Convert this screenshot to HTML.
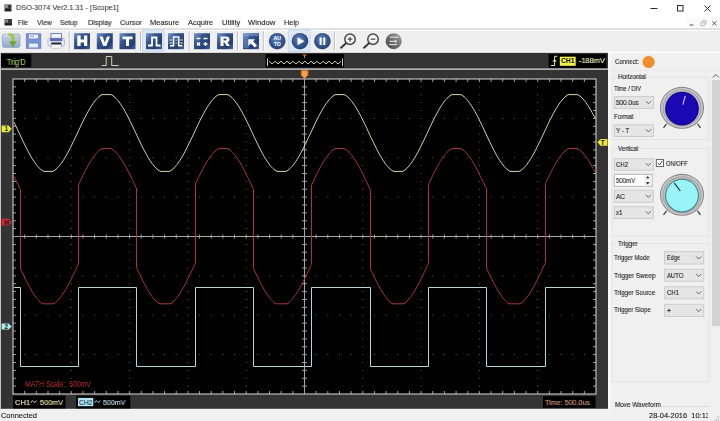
<!DOCTYPE html>
<html><head><meta charset="utf-8"><style>
html,body{margin:0;padding:0;}
body{width:720px;height:421px;position:relative;overflow:hidden;background:#fff;font-family:"Liberation Sans", sans-serif;}
</style></head><body>
<svg width="720" height="421" style="position:absolute;left:0;top:0">
<defs><linearGradient id="gb" x1="0" y1="0" x2="1" y2="1"><stop offset="0" stop-color="#7898d0"/><stop offset="0.35" stop-color="#36558c"/><stop offset="0.75" stop-color="#243e70"/><stop offset="1" stop-color="#4a68a4"/></linearGradient><radialGradient id="gc" cx="0.45" cy="0.4" r="0.65"><stop offset="0" stop-color="#6f8cc4"/><stop offset="0.55" stop-color="#3a5890"/><stop offset="0.85" stop-color="#2a4678"/><stop offset="1" stop-color="#5a78b0"/></radialGradient><linearGradient id="gg" x1="1" y1="0" x2="0" y2="1"><stop offset="0" stop-color="#a8a8a8"/><stop offset="0.5" stop-color="#707070"/><stop offset="1" stop-color="#404040"/></linearGradient><linearGradient id="gf" x1="0" y1="0" x2="0" y2="1"><stop offset="0" stop-color="#c9d6ec"/><stop offset="1" stop-color="#93a7cf"/></linearGradient></defs>
<rect x="4.5" y="4.5" width="7" height="7" fill="#3a3a3a"/><rect x="5" y="5" width="3" height="3" fill="#8a8a8a"/><rect x="5" y="9.5" width="6" height="1.5" fill="#1a1a1a"/>
<path d="M650.5 8.5H657.5" stroke="#2a2a2a" stroke-width="1"/>
<rect x="677.5" y="5.5" width="5.5" height="5.5" fill="none" stroke="#2a2a2a" stroke-width="1"/>
<path d="M704.5 5.5L710.5 11.5M710.5 5.5L704.5 11.5" stroke="#2a2a2a" stroke-width="1"/>
<rect x="4.5" y="19" width="7.5" height="6.5" fill="#3a3a3a"/><rect x="5" y="19.5" width="3" height="3" fill="#8a8a8a"/><rect x="5" y="23.5" width="6.5" height="1.5" fill="#1a1a1a"/>
<rect x="687" y="17" width="33" height="11" fill="#fafafa"/>
<path d="M689.7 25H693.3" stroke="#484848" stroke-width="1"/>
<path d="M702.5 21.5V20.8H706V24H705.2M700.8 22.6H704.3V25.8H700.8Z" fill="none" stroke="#b4b4b4" stroke-width="0.9"/>
<path d="M712.3 21.3L716.5 25.3M716.5 21.3L712.3 25.3" stroke="#585858" stroke-width="1"/>
<rect x="0" y="28.4" width="720" height="1.4" fill="#d0d0d0"/>
<rect x="0" y="29.8" width="720" height="23" fill="#ffffff"/><rect x="0" y="31" width="720" height="20.6" fill="#efefef"/>
<rect x="142.5" y="29.8" width="21.5" height="21.5" fill="#dde7f5" stroke="#c5d6ee" stroke-width="0.8"/>
<rect x="288.3" y="29.8" width="21.8" height="21.8" fill="#dde7f5" stroke="#c5d6ee" stroke-width="0.8"/>
<rect x="68.8" y="31.3" width="1" height="19.4" fill="#b9b9b9"/><rect x="69.8" y="31.3" width="1" height="19.4" fill="#ffffff"/>
<rect x="140.0" y="31.3" width="1" height="19.4" fill="#b9b9b9"/><rect x="141.0" y="31.3" width="1" height="19.4" fill="#ffffff"/>
<rect x="188.8" y="31.3" width="1" height="19.4" fill="#b9b9b9"/><rect x="189.8" y="31.3" width="1" height="19.4" fill="#ffffff"/>
<rect x="237.1" y="31.3" width="1" height="19.4" fill="#b9b9b9"/><rect x="238.1" y="31.3" width="1" height="19.4" fill="#ffffff"/>
<rect x="262.8" y="31.3" width="1" height="19.4" fill="#b9b9b9"/><rect x="263.8" y="31.3" width="1" height="19.4" fill="#ffffff"/>
<rect x="333.9" y="31.3" width="1" height="19.4" fill="#b9b9b9"/><rect x="334.9" y="31.3" width="1" height="19.4" fill="#ffffff"/>
<rect x="2.4" y="34.2" width="17.6" height="13.2" rx="2" fill="url(#gf)" stroke="#8fa2c8" stroke-width="0.8"/>
<path d="M3.5 36.5Q3.5 35.2 5 35.2H9" fill="none" stroke="#e6eefa" stroke-width="1"/>
<path d="M8.6 34.6Q13.2 34.6 13.2 39V41.8" fill="none" stroke="#9ccc3c" stroke-width="3"/>
<path d="M9.2 41.2H16.6L12.9 47.6Z" fill="#6aa822"/>
<rect x="26.3" y="33.8" width="14.5" height="14.5" fill="#7b92d0" stroke="#6279bb" stroke-width="0.8"/>
<rect x="29" y="34.6" width="9" height="3.8" fill="#eef2fb"/><rect x="30" y="35.8" width="4" height="1" fill="#8494c8"/>
<rect x="29" y="43.6" width="9" height="3.8" fill="#e8eefa"/>
<rect x="51" y="33.5" width="10.5" height="5" fill="#f4f6fb" stroke="#5a6aa8" stroke-width="0.8"/>
<rect x="48" y="38.2" width="16.4" height="8" rx="1.5" fill="#eceef6" stroke="#9aa2c8" stroke-width="0.7"/>
<rect x="50" y="38.2" width="12.4" height="3" fill="#5d6cae"/>
<path d="M50.5 45.5L51.5 42.6H61L62 45.5Z" fill="#1e2630"/>
<rect x="51.2" y="44.6" width="10" height="3.6" fill="#f4f6fb" stroke="#aab0cc" stroke-width="0.5"/>
<rect x="74" y="33.2" width="16" height="16" fill="url(#gb)"/>
<rect x="96.8" y="33.2" width="16" height="16" fill="url(#gb)"/>
<rect x="119.5" y="33.2" width="16" height="16" fill="url(#gb)"/>
<rect x="146" y="33.2" width="16" height="16" fill="url(#gb)"/>
<rect x="168" y="33.2" width="16" height="16" fill="url(#gb)"/>
<rect x="194" y="33.2" width="16" height="16" fill="url(#gb)"/>
<rect x="217" y="33.2" width="16" height="16" fill="url(#gb)"/>
<rect x="243" y="33.2" width="16" height="16" fill="url(#gb)"/>
<path d="M77.3 35.6H80.6V39.6H84V35.6H87.3V45.9H84V42.5H80.6V45.9H77.3Z" fill="#fff"/>
<path d="M99.5 36.5H102.7L104.8 42.5L106.9 36.5H110L106.3 46H103.2Z" fill="#fff"/>
<path d="M122.5 36.5H132.5V39.2H129V46H126V39.2H122.5Z" fill="#fff"/>
<path d="M220.5 36.5H226Q229.5 36.5 229.5 39.5Q229.5 41.5 227.5 42.2L230 46H226.7L224.6 42.6H223.5V46H220.5ZM223.5 38.6V40.6H225.6Q226.6 40.6 226.6 39.6Q226.6 38.6 225.6 38.6Z" fill="#fff" fill-rule="evenodd"/>
<path d="M148 45.5H152V37.5H156.5V45.5H160.5" fill="none" stroke="#fff" stroke-width="1.8"/>
<path d="M170 45.7H173.5V37H178.7V45.7H182.3" fill="none" stroke="#fff" stroke-width="1.6"/>
<path d="M169.5 40H172M169.5 43H172M180.3 40H182.8M180.3 43H182.8M176.1 39.5V40.8M176.1 42.5V43.8" fill="none" stroke="#e8eef8" stroke-width="1.1"/>
<path d="M196.5 38.5H200.5M198.5 36.6V36.7M198.5 40.3V40.4M203.5 38.5H207.5M197 42.5L200 45.5M200 42.5L197 45.5M203.5 44H207.5M205.5 42V46" stroke="#fff" stroke-width="1.4"/>
<rect x="243.5" y="33.6" width="5" height="14.5" fill="#6c8cc8" opacity="0.55"/><rect x="243.5" y="33.6" width="15" height="2.5" fill="#8aa6d8" opacity="0.5"/>
<path d="M248.3 39.3H255L253 41.3L257 45.3L254.8 47.5L250.8 43.5L248.3 46Z" fill="#fff"/>
<circle cx="277.2" cy="41.2" r="8.3" fill="url(#gc)"/>
<circle cx="300" cy="41.2" r="8.3" fill="url(#gc)"/>
<circle cx="322.4" cy="41.2" r="8.3" fill="url(#gc)"/>
<text x="277.2" y="40.3" font-family="Liberation Sans" font-weight="bold" font-size="5.2" fill="#fff" text-anchor="middle">AU</text>
<text x="277.2" y="45.8" font-family="Liberation Sans" font-weight="bold" font-size="5.2" fill="#fff" text-anchor="middle">TO</text>
<path d="M297.5 37.3L304.5 41.3L297.5 45.3Z" fill="#fff"/>
<rect x="319.6" y="37.5" width="2" height="7.5" fill="#fff"/><rect x="323.3" y="37.5" width="2" height="7.5" fill="#fff"/>
<circle cx="350.0" cy="39.2" r="5.2" fill="#f4f4f4" stroke="#4a4a4a" stroke-width="1.5"/>
<path d="M346.3 43L340.5 48.2" stroke="#3a3a3a" stroke-width="2"/>
<path d="M347.7 39.2H352.3" stroke="#555" stroke-width="1.3"/>
<path d="M350.0 37V41.4" stroke="#555" stroke-width="1.3"/>
<circle cx="373.0" cy="39.2" r="5.2" fill="#f4f4f4" stroke="#4a4a4a" stroke-width="1.5"/>
<path d="M369.3 43L363.5 48.2" stroke="#3a3a3a" stroke-width="2"/>
<path d="M370.7 39.2H375.3" stroke="#555" stroke-width="1.3"/>
<circle cx="393.7" cy="41.2" r="8" fill="url(#gg)"/>
<path d="M390 37.2H398.5M389.5 41.3H396.5L395 39.8M396.5 41.3L395 42.8M389 44.6H397" fill="none" stroke="#eeeeee" stroke-width="1"/>
</svg><svg width="720" height="421" style="position:absolute;left:0;top:0">
<rect x="0" y="52.8" width="608" height="356" fill="#333333"/>
<rect x="0" y="52.8" width="1" height="356" fill="#c4c4c4"/>
<rect x="1" y="54" width="30.2" height="13.3" fill="#000"/>
<rect x="265.5" y="54" width="78.5" height="13.5" fill="#000"/>
<rect x="548.6" y="54.2" width="57.8" height="13.8" fill="#000"/>
<rect x="1" y="68.5" width="607" height="1.2" fill="#e4e4e4"/>
<rect x="13" y="79" width="583" height="315" fill="#000"/>
<path d="M70.80 86.38h1v1h-1zM70.80 94.25h1v1h-1zM70.80 102.12h1v1h-1zM70.80 110.00h1v1h-1zM70.80 117.88h1v1h-1zM70.80 125.75h1v1h-1zM70.80 133.62h1v1h-1zM70.80 141.50h1v1h-1zM70.80 149.38h1v1h-1zM70.80 157.25h1v1h-1zM70.80 165.12h1v1h-1zM70.80 173.00h1v1h-1zM70.80 180.88h1v1h-1zM70.80 188.75h1v1h-1zM70.80 196.62h1v1h-1zM70.80 204.50h1v1h-1zM70.80 212.38h1v1h-1zM70.80 220.25h1v1h-1zM70.80 228.12h1v1h-1zM70.80 236.00h1v1h-1zM70.80 243.88h1v1h-1zM70.80 251.75h1v1h-1zM70.80 259.62h1v1h-1zM70.80 267.50h1v1h-1zM70.80 275.38h1v1h-1zM70.80 283.25h1v1h-1zM70.80 291.12h1v1h-1zM70.80 299.00h1v1h-1zM70.80 306.88h1v1h-1zM70.80 314.75h1v1h-1zM70.80 322.62h1v1h-1zM70.80 330.50h1v1h-1zM70.80 338.38h1v1h-1zM70.80 346.25h1v1h-1zM70.80 354.12h1v1h-1zM70.80 362.00h1v1h-1zM70.80 369.88h1v1h-1zM70.80 377.75h1v1h-1zM70.80 385.62h1v1h-1zM129.10 86.38h1v1h-1zM129.10 94.25h1v1h-1zM129.10 102.12h1v1h-1zM129.10 110.00h1v1h-1zM129.10 117.88h1v1h-1zM129.10 125.75h1v1h-1zM129.10 133.62h1v1h-1zM129.10 141.50h1v1h-1zM129.10 149.38h1v1h-1zM129.10 157.25h1v1h-1zM129.10 165.12h1v1h-1zM129.10 173.00h1v1h-1zM129.10 180.88h1v1h-1zM129.10 188.75h1v1h-1zM129.10 196.62h1v1h-1zM129.10 204.50h1v1h-1zM129.10 212.38h1v1h-1zM129.10 220.25h1v1h-1zM129.10 228.12h1v1h-1zM129.10 236.00h1v1h-1zM129.10 243.88h1v1h-1zM129.10 251.75h1v1h-1zM129.10 259.62h1v1h-1zM129.10 267.50h1v1h-1zM129.10 275.38h1v1h-1zM129.10 283.25h1v1h-1zM129.10 291.12h1v1h-1zM129.10 299.00h1v1h-1zM129.10 306.88h1v1h-1zM129.10 314.75h1v1h-1zM129.10 322.62h1v1h-1zM129.10 330.50h1v1h-1zM129.10 338.38h1v1h-1zM129.10 346.25h1v1h-1zM129.10 354.12h1v1h-1zM129.10 362.00h1v1h-1zM129.10 369.88h1v1h-1zM129.10 377.75h1v1h-1zM129.10 385.62h1v1h-1zM187.40 86.38h1v1h-1zM187.40 94.25h1v1h-1zM187.40 102.12h1v1h-1zM187.40 110.00h1v1h-1zM187.40 117.88h1v1h-1zM187.40 125.75h1v1h-1zM187.40 133.62h1v1h-1zM187.40 141.50h1v1h-1zM187.40 149.38h1v1h-1zM187.40 157.25h1v1h-1zM187.40 165.12h1v1h-1zM187.40 173.00h1v1h-1zM187.40 180.88h1v1h-1zM187.40 188.75h1v1h-1zM187.40 196.62h1v1h-1zM187.40 204.50h1v1h-1zM187.40 212.38h1v1h-1zM187.40 220.25h1v1h-1zM187.40 228.12h1v1h-1zM187.40 236.00h1v1h-1zM187.40 243.88h1v1h-1zM187.40 251.75h1v1h-1zM187.40 259.62h1v1h-1zM187.40 267.50h1v1h-1zM187.40 275.38h1v1h-1zM187.40 283.25h1v1h-1zM187.40 291.12h1v1h-1zM187.40 299.00h1v1h-1zM187.40 306.88h1v1h-1zM187.40 314.75h1v1h-1zM187.40 322.62h1v1h-1zM187.40 330.50h1v1h-1zM187.40 338.38h1v1h-1zM187.40 346.25h1v1h-1zM187.40 354.12h1v1h-1zM187.40 362.00h1v1h-1zM187.40 369.88h1v1h-1zM187.40 377.75h1v1h-1zM187.40 385.62h1v1h-1zM245.70 86.38h1v1h-1zM245.70 94.25h1v1h-1zM245.70 102.12h1v1h-1zM245.70 110.00h1v1h-1zM245.70 117.88h1v1h-1zM245.70 125.75h1v1h-1zM245.70 133.62h1v1h-1zM245.70 141.50h1v1h-1zM245.70 149.38h1v1h-1zM245.70 157.25h1v1h-1zM245.70 165.12h1v1h-1zM245.70 173.00h1v1h-1zM245.70 180.88h1v1h-1zM245.70 188.75h1v1h-1zM245.70 196.62h1v1h-1zM245.70 204.50h1v1h-1zM245.70 212.38h1v1h-1zM245.70 220.25h1v1h-1zM245.70 228.12h1v1h-1zM245.70 236.00h1v1h-1zM245.70 243.88h1v1h-1zM245.70 251.75h1v1h-1zM245.70 259.62h1v1h-1zM245.70 267.50h1v1h-1zM245.70 275.38h1v1h-1zM245.70 283.25h1v1h-1zM245.70 291.12h1v1h-1zM245.70 299.00h1v1h-1zM245.70 306.88h1v1h-1zM245.70 314.75h1v1h-1zM245.70 322.62h1v1h-1zM245.70 330.50h1v1h-1zM245.70 338.38h1v1h-1zM245.70 346.25h1v1h-1zM245.70 354.12h1v1h-1zM245.70 362.00h1v1h-1zM245.70 369.88h1v1h-1zM245.70 377.75h1v1h-1zM245.70 385.62h1v1h-1zM362.30 86.38h1v1h-1zM362.30 94.25h1v1h-1zM362.30 102.12h1v1h-1zM362.30 110.00h1v1h-1zM362.30 117.88h1v1h-1zM362.30 125.75h1v1h-1zM362.30 133.62h1v1h-1zM362.30 141.50h1v1h-1zM362.30 149.38h1v1h-1zM362.30 157.25h1v1h-1zM362.30 165.12h1v1h-1zM362.30 173.00h1v1h-1zM362.30 180.88h1v1h-1zM362.30 188.75h1v1h-1zM362.30 196.62h1v1h-1zM362.30 204.50h1v1h-1zM362.30 212.38h1v1h-1zM362.30 220.25h1v1h-1zM362.30 228.12h1v1h-1zM362.30 236.00h1v1h-1zM362.30 243.88h1v1h-1zM362.30 251.75h1v1h-1zM362.30 259.62h1v1h-1zM362.30 267.50h1v1h-1zM362.30 275.38h1v1h-1zM362.30 283.25h1v1h-1zM362.30 291.12h1v1h-1zM362.30 299.00h1v1h-1zM362.30 306.88h1v1h-1zM362.30 314.75h1v1h-1zM362.30 322.62h1v1h-1zM362.30 330.50h1v1h-1zM362.30 338.38h1v1h-1zM362.30 346.25h1v1h-1zM362.30 354.12h1v1h-1zM362.30 362.00h1v1h-1zM362.30 369.88h1v1h-1zM362.30 377.75h1v1h-1zM362.30 385.62h1v1h-1zM420.60 86.38h1v1h-1zM420.60 94.25h1v1h-1zM420.60 102.12h1v1h-1zM420.60 110.00h1v1h-1zM420.60 117.88h1v1h-1zM420.60 125.75h1v1h-1zM420.60 133.62h1v1h-1zM420.60 141.50h1v1h-1zM420.60 149.38h1v1h-1zM420.60 157.25h1v1h-1zM420.60 165.12h1v1h-1zM420.60 173.00h1v1h-1zM420.60 180.88h1v1h-1zM420.60 188.75h1v1h-1zM420.60 196.62h1v1h-1zM420.60 204.50h1v1h-1zM420.60 212.38h1v1h-1zM420.60 220.25h1v1h-1zM420.60 228.12h1v1h-1zM420.60 236.00h1v1h-1zM420.60 243.88h1v1h-1zM420.60 251.75h1v1h-1zM420.60 259.62h1v1h-1zM420.60 267.50h1v1h-1zM420.60 275.38h1v1h-1zM420.60 283.25h1v1h-1zM420.60 291.12h1v1h-1zM420.60 299.00h1v1h-1zM420.60 306.88h1v1h-1zM420.60 314.75h1v1h-1zM420.60 322.62h1v1h-1zM420.60 330.50h1v1h-1zM420.60 338.38h1v1h-1zM420.60 346.25h1v1h-1zM420.60 354.12h1v1h-1zM420.60 362.00h1v1h-1zM420.60 369.88h1v1h-1zM420.60 377.75h1v1h-1zM420.60 385.62h1v1h-1zM478.90 86.38h1v1h-1zM478.90 94.25h1v1h-1zM478.90 102.12h1v1h-1zM478.90 110.00h1v1h-1zM478.90 117.88h1v1h-1zM478.90 125.75h1v1h-1zM478.90 133.62h1v1h-1zM478.90 141.50h1v1h-1zM478.90 149.38h1v1h-1zM478.90 157.25h1v1h-1zM478.90 165.12h1v1h-1zM478.90 173.00h1v1h-1zM478.90 180.88h1v1h-1zM478.90 188.75h1v1h-1zM478.90 196.62h1v1h-1zM478.90 204.50h1v1h-1zM478.90 212.38h1v1h-1zM478.90 220.25h1v1h-1zM478.90 228.12h1v1h-1zM478.90 236.00h1v1h-1zM478.90 243.88h1v1h-1zM478.90 251.75h1v1h-1zM478.90 259.62h1v1h-1zM478.90 267.50h1v1h-1zM478.90 275.38h1v1h-1zM478.90 283.25h1v1h-1zM478.90 291.12h1v1h-1zM478.90 299.00h1v1h-1zM478.90 306.88h1v1h-1zM478.90 314.75h1v1h-1zM478.90 322.62h1v1h-1zM478.90 330.50h1v1h-1zM478.90 338.38h1v1h-1zM478.90 346.25h1v1h-1zM478.90 354.12h1v1h-1zM478.90 362.00h1v1h-1zM478.90 369.88h1v1h-1zM478.90 377.75h1v1h-1zM478.90 385.62h1v1h-1zM537.20 86.38h1v1h-1zM537.20 94.25h1v1h-1zM537.20 102.12h1v1h-1zM537.20 110.00h1v1h-1zM537.20 117.88h1v1h-1zM537.20 125.75h1v1h-1zM537.20 133.62h1v1h-1zM537.20 141.50h1v1h-1zM537.20 149.38h1v1h-1zM537.20 157.25h1v1h-1zM537.20 165.12h1v1h-1zM537.20 173.00h1v1h-1zM537.20 180.88h1v1h-1zM537.20 188.75h1v1h-1zM537.20 196.62h1v1h-1zM537.20 204.50h1v1h-1zM537.20 212.38h1v1h-1zM537.20 220.25h1v1h-1zM537.20 228.12h1v1h-1zM537.20 236.00h1v1h-1zM537.20 243.88h1v1h-1zM537.20 251.75h1v1h-1zM537.20 259.62h1v1h-1zM537.20 267.50h1v1h-1zM537.20 275.38h1v1h-1zM537.20 283.25h1v1h-1zM537.20 291.12h1v1h-1zM537.20 299.00h1v1h-1zM537.20 306.88h1v1h-1zM537.20 314.75h1v1h-1zM537.20 322.62h1v1h-1zM537.20 330.50h1v1h-1zM537.20 338.38h1v1h-1zM537.20 346.25h1v1h-1zM537.20 354.12h1v1h-1zM537.20 362.00h1v1h-1zM537.20 369.88h1v1h-1zM537.20 377.75h1v1h-1zM537.20 385.62h1v1h-1zM24.16 117.88h1v1h-1zM35.82 117.88h1v1h-1zM47.48 117.88h1v1h-1zM59.14 117.88h1v1h-1zM82.46 117.88h1v1h-1zM94.12 117.88h1v1h-1zM105.78 117.88h1v1h-1zM117.44 117.88h1v1h-1zM140.76 117.88h1v1h-1zM152.42 117.88h1v1h-1zM164.08 117.88h1v1h-1zM175.74 117.88h1v1h-1zM199.06 117.88h1v1h-1zM210.72 117.88h1v1h-1zM222.38 117.88h1v1h-1zM234.04 117.88h1v1h-1zM257.36 117.88h1v1h-1zM269.02 117.88h1v1h-1zM280.68 117.88h1v1h-1zM292.34 117.88h1v1h-1zM315.66 117.88h1v1h-1zM327.32 117.88h1v1h-1zM338.98 117.88h1v1h-1zM350.64 117.88h1v1h-1zM373.96 117.88h1v1h-1zM385.62 117.88h1v1h-1zM397.28 117.88h1v1h-1zM408.94 117.88h1v1h-1zM432.26 117.88h1v1h-1zM443.92 117.88h1v1h-1zM455.58 117.88h1v1h-1zM467.24 117.88h1v1h-1zM490.56 117.88h1v1h-1zM502.22 117.88h1v1h-1zM513.88 117.88h1v1h-1zM525.54 117.88h1v1h-1zM548.86 117.88h1v1h-1zM560.52 117.88h1v1h-1zM572.18 117.88h1v1h-1zM583.84 117.88h1v1h-1zM24.16 157.25h1v1h-1zM35.82 157.25h1v1h-1zM47.48 157.25h1v1h-1zM59.14 157.25h1v1h-1zM82.46 157.25h1v1h-1zM94.12 157.25h1v1h-1zM105.78 157.25h1v1h-1zM117.44 157.25h1v1h-1zM140.76 157.25h1v1h-1zM152.42 157.25h1v1h-1zM164.08 157.25h1v1h-1zM175.74 157.25h1v1h-1zM199.06 157.25h1v1h-1zM210.72 157.25h1v1h-1zM222.38 157.25h1v1h-1zM234.04 157.25h1v1h-1zM257.36 157.25h1v1h-1zM269.02 157.25h1v1h-1zM280.68 157.25h1v1h-1zM292.34 157.25h1v1h-1zM315.66 157.25h1v1h-1zM327.32 157.25h1v1h-1zM338.98 157.25h1v1h-1zM350.64 157.25h1v1h-1zM373.96 157.25h1v1h-1zM385.62 157.25h1v1h-1zM397.28 157.25h1v1h-1zM408.94 157.25h1v1h-1zM432.26 157.25h1v1h-1zM443.92 157.25h1v1h-1zM455.58 157.25h1v1h-1zM467.24 157.25h1v1h-1zM490.56 157.25h1v1h-1zM502.22 157.25h1v1h-1zM513.88 157.25h1v1h-1zM525.54 157.25h1v1h-1zM548.86 157.25h1v1h-1zM560.52 157.25h1v1h-1zM572.18 157.25h1v1h-1zM583.84 157.25h1v1h-1zM24.16 196.62h1v1h-1zM35.82 196.62h1v1h-1zM47.48 196.62h1v1h-1zM59.14 196.62h1v1h-1zM82.46 196.62h1v1h-1zM94.12 196.62h1v1h-1zM105.78 196.62h1v1h-1zM117.44 196.62h1v1h-1zM140.76 196.62h1v1h-1zM152.42 196.62h1v1h-1zM164.08 196.62h1v1h-1zM175.74 196.62h1v1h-1zM199.06 196.62h1v1h-1zM210.72 196.62h1v1h-1zM222.38 196.62h1v1h-1zM234.04 196.62h1v1h-1zM257.36 196.62h1v1h-1zM269.02 196.62h1v1h-1zM280.68 196.62h1v1h-1zM292.34 196.62h1v1h-1zM315.66 196.62h1v1h-1zM327.32 196.62h1v1h-1zM338.98 196.62h1v1h-1zM350.64 196.62h1v1h-1zM373.96 196.62h1v1h-1zM385.62 196.62h1v1h-1zM397.28 196.62h1v1h-1zM408.94 196.62h1v1h-1zM432.26 196.62h1v1h-1zM443.92 196.62h1v1h-1zM455.58 196.62h1v1h-1zM467.24 196.62h1v1h-1zM490.56 196.62h1v1h-1zM502.22 196.62h1v1h-1zM513.88 196.62h1v1h-1zM525.54 196.62h1v1h-1zM548.86 196.62h1v1h-1zM560.52 196.62h1v1h-1zM572.18 196.62h1v1h-1zM583.84 196.62h1v1h-1zM24.16 275.38h1v1h-1zM35.82 275.38h1v1h-1zM47.48 275.38h1v1h-1zM59.14 275.38h1v1h-1zM82.46 275.38h1v1h-1zM94.12 275.38h1v1h-1zM105.78 275.38h1v1h-1zM117.44 275.38h1v1h-1zM140.76 275.38h1v1h-1zM152.42 275.38h1v1h-1zM164.08 275.38h1v1h-1zM175.74 275.38h1v1h-1zM199.06 275.38h1v1h-1zM210.72 275.38h1v1h-1zM222.38 275.38h1v1h-1zM234.04 275.38h1v1h-1zM257.36 275.38h1v1h-1zM269.02 275.38h1v1h-1zM280.68 275.38h1v1h-1zM292.34 275.38h1v1h-1zM315.66 275.38h1v1h-1zM327.32 275.38h1v1h-1zM338.98 275.38h1v1h-1zM350.64 275.38h1v1h-1zM373.96 275.38h1v1h-1zM385.62 275.38h1v1h-1zM397.28 275.38h1v1h-1zM408.94 275.38h1v1h-1zM432.26 275.38h1v1h-1zM443.92 275.38h1v1h-1zM455.58 275.38h1v1h-1zM467.24 275.38h1v1h-1zM490.56 275.38h1v1h-1zM502.22 275.38h1v1h-1zM513.88 275.38h1v1h-1zM525.54 275.38h1v1h-1zM548.86 275.38h1v1h-1zM560.52 275.38h1v1h-1zM572.18 275.38h1v1h-1zM583.84 275.38h1v1h-1zM24.16 314.75h1v1h-1zM35.82 314.75h1v1h-1zM47.48 314.75h1v1h-1zM59.14 314.75h1v1h-1zM82.46 314.75h1v1h-1zM94.12 314.75h1v1h-1zM105.78 314.75h1v1h-1zM117.44 314.75h1v1h-1zM140.76 314.75h1v1h-1zM152.42 314.75h1v1h-1zM164.08 314.75h1v1h-1zM175.74 314.75h1v1h-1zM199.06 314.75h1v1h-1zM210.72 314.75h1v1h-1zM222.38 314.75h1v1h-1zM234.04 314.75h1v1h-1zM257.36 314.75h1v1h-1zM269.02 314.75h1v1h-1zM280.68 314.75h1v1h-1zM292.34 314.75h1v1h-1zM315.66 314.75h1v1h-1zM327.32 314.75h1v1h-1zM338.98 314.75h1v1h-1zM350.64 314.75h1v1h-1zM373.96 314.75h1v1h-1zM385.62 314.75h1v1h-1zM397.28 314.75h1v1h-1zM408.94 314.75h1v1h-1zM432.26 314.75h1v1h-1zM443.92 314.75h1v1h-1zM455.58 314.75h1v1h-1zM467.24 314.75h1v1h-1zM490.56 314.75h1v1h-1zM502.22 314.75h1v1h-1zM513.88 314.75h1v1h-1zM525.54 314.75h1v1h-1zM548.86 314.75h1v1h-1zM560.52 314.75h1v1h-1zM572.18 314.75h1v1h-1zM583.84 314.75h1v1h-1zM24.16 354.12h1v1h-1zM35.82 354.12h1v1h-1zM47.48 354.12h1v1h-1zM59.14 354.12h1v1h-1zM82.46 354.12h1v1h-1zM94.12 354.12h1v1h-1zM105.78 354.12h1v1h-1zM117.44 354.12h1v1h-1zM140.76 354.12h1v1h-1zM152.42 354.12h1v1h-1zM164.08 354.12h1v1h-1zM175.74 354.12h1v1h-1zM199.06 354.12h1v1h-1zM210.72 354.12h1v1h-1zM222.38 354.12h1v1h-1zM234.04 354.12h1v1h-1zM257.36 354.12h1v1h-1zM269.02 354.12h1v1h-1zM280.68 354.12h1v1h-1zM292.34 354.12h1v1h-1zM315.66 354.12h1v1h-1zM327.32 354.12h1v1h-1zM338.98 354.12h1v1h-1zM350.64 354.12h1v1h-1zM373.96 354.12h1v1h-1zM385.62 354.12h1v1h-1zM397.28 354.12h1v1h-1zM408.94 354.12h1v1h-1zM432.26 354.12h1v1h-1zM443.92 354.12h1v1h-1zM455.58 354.12h1v1h-1zM467.24 354.12h1v1h-1zM490.56 354.12h1v1h-1zM502.22 354.12h1v1h-1zM513.88 354.12h1v1h-1zM525.54 354.12h1v1h-1zM548.86 354.12h1v1h-1zM560.52 354.12h1v1h-1zM572.18 354.12h1v1h-1zM583.84 354.12h1v1h-1z" fill="#5c5c5c"/>
<path d="M13 236.50H596M304.50 79V394" stroke="#a8a8a8" stroke-width="1"/>
<path d="M24.66 234.50V238.50M24.66 79V82M24.66 394V391M36.32 234.50V238.50M36.32 79V82M36.32 394V391M47.98 234.50V238.50M47.98 79V82M47.98 394V391M59.64 234.50V238.50M59.64 79V82M59.64 394V391M71.30 234.50V238.50M71.30 79V82M71.30 394V391M82.96 234.50V238.50M82.96 79V82M82.96 394V391M94.62 234.50V238.50M94.62 79V82M94.62 394V391M106.28 234.50V238.50M106.28 79V82M106.28 394V391M117.94 234.50V238.50M117.94 79V82M117.94 394V391M129.60 234.50V238.50M129.60 79V82M129.60 394V391M141.26 234.50V238.50M141.26 79V82M141.26 394V391M152.92 234.50V238.50M152.92 79V82M152.92 394V391M164.58 234.50V238.50M164.58 79V82M164.58 394V391M176.24 234.50V238.50M176.24 79V82M176.24 394V391M187.90 234.50V238.50M187.90 79V82M187.90 394V391M199.56 234.50V238.50M199.56 79V82M199.56 394V391M211.22 234.50V238.50M211.22 79V82M211.22 394V391M222.88 234.50V238.50M222.88 79V82M222.88 394V391M234.54 234.50V238.50M234.54 79V82M234.54 394V391M246.20 234.50V238.50M246.20 79V82M246.20 394V391M257.86 234.50V238.50M257.86 79V82M257.86 394V391M269.52 234.50V238.50M269.52 79V82M269.52 394V391M281.18 234.50V238.50M281.18 79V82M281.18 394V391M292.84 234.50V238.50M292.84 79V82M292.84 394V391M304.50 234.50V238.50M304.50 79V82M304.50 394V391M316.16 234.50V238.50M316.16 79V82M316.16 394V391M327.82 234.50V238.50M327.82 79V82M327.82 394V391M339.48 234.50V238.50M339.48 79V82M339.48 394V391M351.14 234.50V238.50M351.14 79V82M351.14 394V391M362.80 234.50V238.50M362.80 79V82M362.80 394V391M374.46 234.50V238.50M374.46 79V82M374.46 394V391M386.12 234.50V238.50M386.12 79V82M386.12 394V391M397.78 234.50V238.50M397.78 79V82M397.78 394V391M409.44 234.50V238.50M409.44 79V82M409.44 394V391M421.10 234.50V238.50M421.10 79V82M421.10 394V391M432.76 234.50V238.50M432.76 79V82M432.76 394V391M444.42 234.50V238.50M444.42 79V82M444.42 394V391M456.08 234.50V238.50M456.08 79V82M456.08 394V391M467.74 234.50V238.50M467.74 79V82M467.74 394V391M479.40 234.50V238.50M479.40 79V82M479.40 394V391M491.06 234.50V238.50M491.06 79V82M491.06 394V391M502.72 234.50V238.50M502.72 79V82M502.72 394V391M514.38 234.50V238.50M514.38 79V82M514.38 394V391M526.04 234.50V238.50M526.04 79V82M526.04 394V391M537.70 234.50V238.50M537.70 79V82M537.70 394V391M549.36 234.50V238.50M549.36 79V82M549.36 394V391M561.02 234.50V238.50M561.02 79V82M561.02 394V391M572.68 234.50V238.50M572.68 79V82M572.68 394V391M584.34 234.50V238.50M584.34 79V82M584.34 394V391M302.00 86.88H307.00M13 86.88H16M596 86.88H593M302.00 94.75H307.00M13 94.75H16M596 94.75H593M302.00 102.62H307.00M13 102.62H16M596 102.62H593M302.00 110.50H307.00M13 110.50H16M596 110.50H593M302.00 118.38H307.00M13 118.38H16M596 118.38H593M302.00 126.25H307.00M13 126.25H16M596 126.25H593M302.00 134.12H307.00M13 134.12H16M596 134.12H593M302.00 142.00H307.00M13 142.00H16M596 142.00H593M302.00 149.88H307.00M13 149.88H16M596 149.88H593M302.00 157.75H307.00M13 157.75H16M596 157.75H593M302.00 165.62H307.00M13 165.62H16M596 165.62H593M302.00 173.50H307.00M13 173.50H16M596 173.50H593M302.00 181.38H307.00M13 181.38H16M596 181.38H593M302.00 189.25H307.00M13 189.25H16M596 189.25H593M302.00 197.12H307.00M13 197.12H16M596 197.12H593M302.00 205.00H307.00M13 205.00H16M596 205.00H593M302.00 212.88H307.00M13 212.88H16M596 212.88H593M302.00 220.75H307.00M13 220.75H16M596 220.75H593M302.00 228.62H307.00M13 228.62H16M596 228.62H593M302.00 236.50H307.00M13 236.50H16M596 236.50H593M302.00 244.38H307.00M13 244.38H16M596 244.38H593M302.00 252.25H307.00M13 252.25H16M596 252.25H593M302.00 260.12H307.00M13 260.12H16M596 260.12H593M302.00 268.00H307.00M13 268.00H16M596 268.00H593M302.00 275.88H307.00M13 275.88H16M596 275.88H593M302.00 283.75H307.00M13 283.75H16M596 283.75H593M302.00 291.62H307.00M13 291.62H16M596 291.62H593M302.00 299.50H307.00M13 299.50H16M596 299.50H593M302.00 307.38H307.00M13 307.38H16M596 307.38H593M302.00 315.25H307.00M13 315.25H16M596 315.25H593M302.00 323.12H307.00M13 323.12H16M596 323.12H593M302.00 331.00H307.00M13 331.00H16M596 331.00H593M302.00 338.88H307.00M13 338.88H16M596 338.88H593M302.00 346.75H307.00M13 346.75H16M596 346.75H593M302.00 354.62H307.00M13 354.62H16M596 354.62H593M302.00 362.50H307.00M13 362.50H16M596 362.50H593M302.00 370.38H307.00M13 370.38H16M596 370.38H593M302.00 378.25H307.00M13 378.25H16M596 378.25H593M302.00 386.12H307.00M13 386.12H16M596 386.12H593" stroke="#a0a0a0" stroke-width="1"/>
<rect x="13" y="79" width="583" height="315" fill="none" stroke="#cacaca" stroke-width="1.1"/>
<polyline points="14.0,122.15 15.0,124.22 16.0,126.31 17.0,128.42 18.0,130.55 19.0,132.68 20.0,134.81 21.0,136.94 22.0,139.06 23.0,141.16 24.0,143.23 25.0,145.28 26.0,147.29 27.0,149.26 28.0,151.18 29.0,153.05 30.0,154.86 31.0,156.60 32.0,158.28 33.0,159.89 34.0,161.41 35.0,162.86 36.0,164.22 37.0,165.48 38.0,166.66 39.0,167.73 40.0,168.70 41.0,169.58 42.0,170.34 43.0,171.00 44.0,171.40 45.0,171.40 46.0,171.40 47.0,171.40 48.0,171.40 49.0,171.40 50.0,171.40 51.0,171.40 52.0,171.40 53.0,171.34 54.0,170.75 55.0,170.05 56.0,169.24 57.0,168.33 58.0,167.31 59.0,166.20 60.0,164.99 61.0,163.68 62.0,162.29 63.0,160.81 64.0,159.25 65.0,157.62 66.0,155.91 67.0,154.14 68.0,152.31 69.0,150.41 70.0,148.47 71.0,146.49 72.0,144.46 73.0,142.41 74.0,140.32 75.0,138.21 76.0,136.09 77.0,133.96 78.0,131.83 79.0,129.70 80.0,127.58 81.0,125.47 82.0,123.39 83.0,121.33 84.0,119.31 85.0,117.33 86.0,115.39 87.0,113.51 88.0,111.68 89.0,109.91 90.0,108.21 91.0,106.59 92.0,105.04 93.0,103.57 94.0,102.18 95.0,100.89 96.0,99.69 97.0,98.58 98.0,97.58 99.0,96.67 100.0,95.88 101.0,95.19 102.0,94.61 103.0,94.60 104.0,94.60 105.0,94.60 106.0,94.60 107.0,94.60 108.0,94.60 109.0,94.60 110.0,94.60 111.0,94.60 112.0,95.06 113.0,95.73 114.0,96.51 115.0,97.39 116.0,98.37 117.0,99.46 118.0,100.64 119.0,101.92 120.0,103.28 121.0,104.74 122.0,106.27 123.0,107.88 124.0,109.57 125.0,111.32 126.0,113.14 127.0,115.01 128.0,116.94 129.0,118.91 130.0,120.93 131.0,122.97 132.0,125.05 133.0,127.15 134.0,129.27 135.0,131.40 136.0,133.53 137.0,135.67 138.0,137.79 139.0,139.90 140.0,141.99 141.0,144.05 142.0,146.09 143.0,148.08 144.0,150.03 145.0,151.93 146.0,153.78 147.0,155.56 148.0,157.28 149.0,158.93 150.0,160.51 151.0,162.00 152.0,163.41 153.0,164.73 154.0,165.96 155.0,167.10 156.0,168.13 157.0,169.07 158.0,169.89 159.0,170.62 160.0,171.23 161.0,171.40 162.0,171.40 163.0,171.40 164.0,171.40 165.0,171.40 166.0,171.40 167.0,171.40 168.0,171.40 169.0,171.40 170.0,171.11 171.0,170.48 172.0,169.74 173.0,168.89 174.0,167.93 175.0,166.88 176.0,165.72 177.0,164.48 178.0,163.14 179.0,161.71 180.0,160.20 181.0,158.61 182.0,156.94 183.0,155.21 184.0,153.41 185.0,151.56 186.0,149.64 187.0,147.68 188.0,145.68 189.0,143.64 190.0,141.57 191.0,139.48 192.0,137.37 193.0,135.24 194.0,133.11 195.0,130.97 196.0,128.85 197.0,126.73 198.0,124.63 199.0,122.56 200.0,120.52 201.0,118.51 202.0,116.55 203.0,114.63 204.0,112.77 205.0,110.97 206.0,109.23 207.0,107.55 208.0,105.96 209.0,104.44 210.0,103.00 211.0,101.65 212.0,100.40 213.0,99.23 214.0,98.17 215.0,97.20 216.0,96.34 217.0,95.59 218.0,94.94 219.0,94.60 220.0,94.60 221.0,94.60 222.0,94.60 223.0,94.60 224.0,94.60 225.0,94.60 226.0,94.60 227.0,94.60 228.0,94.72 229.0,95.32 230.0,96.03 231.0,96.85 232.0,97.77 233.0,98.79 234.0,99.92 235.0,101.14 236.0,102.45 237.0,103.85 238.0,105.34 239.0,106.91 240.0,108.55 241.0,110.26 242.0,112.04 243.0,113.88 244.0,115.78 245.0,117.72 246.0,119.71 247.0,121.74 248.0,123.80 249.0,125.89 250.0,128.00 251.0,130.12 252.0,132.25 253.0,134.39 254.0,136.52 255.0,138.64 256.0,140.74 257.0,142.82 258.0,144.87 259.0,146.89 260.0,148.87 261.0,150.80 262.0,152.68 263.0,154.50 264.0,156.26 265.0,157.95 266.0,159.57 267.0,161.11 268.0,162.58 269.0,163.95 270.0,165.24 271.0,166.43 272.0,167.52 273.0,168.52 274.0,169.41 275.0,170.20 276.0,170.87 277.0,171.40 278.0,171.40 279.0,171.40 280.0,171.40 281.0,171.40 282.0,171.40 283.0,171.40 284.0,171.40 285.0,171.40 286.0,171.40 287.0,170.87 288.0,170.20 289.0,169.41 290.0,168.52 291.0,167.52 292.0,166.43 293.0,165.24 294.0,163.95 295.0,162.58 296.0,161.11 297.0,159.57 298.0,157.95 299.0,156.26 300.0,154.50 301.0,152.68 302.0,150.80 303.0,148.87 304.0,146.89 305.0,144.87 306.0,142.82 307.0,140.74 308.0,138.64 309.0,136.52 310.0,134.39 311.0,132.25 312.0,130.12 313.0,128.00 314.0,125.89 315.0,123.80 316.0,121.74 317.0,119.71 318.0,117.72 319.0,115.78 320.0,113.88 321.0,112.04 322.0,110.26 323.0,108.55 324.0,106.91 325.0,105.34 326.0,103.85 327.0,102.45 328.0,101.14 329.0,99.92 330.0,98.79 331.0,97.77 332.0,96.85 333.0,96.03 334.0,95.32 335.0,94.72 336.0,94.60 337.0,94.60 338.0,94.60 339.0,94.60 340.0,94.60 341.0,94.60 342.0,94.60 343.0,94.60 344.0,94.60 345.0,94.94 346.0,95.59 347.0,96.34 348.0,97.20 349.0,98.17 350.0,99.23 351.0,100.40 352.0,101.65 353.0,103.00 354.0,104.44 355.0,105.96 356.0,107.55 357.0,109.23 358.0,110.97 359.0,112.77 360.0,114.63 361.0,116.55 362.0,118.51 363.0,120.52 364.0,122.56 365.0,124.63 366.0,126.73 367.0,128.85 368.0,130.97 369.0,133.11 370.0,135.24 371.0,137.37 372.0,139.48 373.0,141.57 374.0,143.64 375.0,145.68 376.0,147.68 377.0,149.64 378.0,151.56 379.0,153.41 380.0,155.21 381.0,156.94 382.0,158.61 383.0,160.20 384.0,161.71 385.0,163.14 386.0,164.48 387.0,165.72 388.0,166.88 389.0,167.93 390.0,168.89 391.0,169.74 392.0,170.48 393.0,171.11 394.0,171.40 395.0,171.40 396.0,171.40 397.0,171.40 398.0,171.40 399.0,171.40 400.0,171.40 401.0,171.40 402.0,171.40 403.0,171.23 404.0,170.62 405.0,169.89 406.0,169.07 407.0,168.13 408.0,167.10 409.0,165.96 410.0,164.73 411.0,163.41 412.0,162.00 413.0,160.51 414.0,158.93 415.0,157.28 416.0,155.56 417.0,153.78 418.0,151.93 419.0,150.03 420.0,148.08 421.0,146.09 422.0,144.05 423.0,141.99 424.0,139.90 425.0,137.79 426.0,135.67 427.0,133.53 428.0,131.40 429.0,129.27 430.0,127.15 431.0,125.05 432.0,122.97 433.0,120.93 434.0,118.91 435.0,116.94 436.0,115.01 437.0,113.14 438.0,111.32 439.0,109.57 440.0,107.88 441.0,106.27 442.0,104.74 443.0,103.28 444.0,101.92 445.0,100.64 446.0,99.46 447.0,98.37 448.0,97.39 449.0,96.51 450.0,95.73 451.0,95.06 452.0,94.60 453.0,94.60 454.0,94.60 455.0,94.60 456.0,94.60 457.0,94.60 458.0,94.60 459.0,94.60 460.0,94.60 461.0,94.61 462.0,95.19 463.0,95.88 464.0,96.67 465.0,97.58 466.0,98.58 467.0,99.69 468.0,100.89 469.0,102.18 470.0,103.57 471.0,105.04 472.0,106.59 473.0,108.21 474.0,109.91 475.0,111.68 476.0,113.51 477.0,115.39 478.0,117.33 479.0,119.31 480.0,121.33 481.0,123.39 482.0,125.47 483.0,127.58 484.0,129.70 485.0,131.83 486.0,133.96 487.0,136.09 488.0,138.21 489.0,140.32 490.0,142.41 491.0,144.46 492.0,146.49 493.0,148.47 494.0,150.41 495.0,152.31 496.0,154.14 497.0,155.91 498.0,157.62 499.0,159.25 500.0,160.81 501.0,162.29 502.0,163.68 503.0,164.99 504.0,166.20 505.0,167.31 506.0,168.33 507.0,169.24 508.0,170.05 509.0,170.75 510.0,171.34 511.0,171.40 512.0,171.40 513.0,171.40 514.0,171.40 515.0,171.40 516.0,171.40 517.0,171.40 518.0,171.40 519.0,171.40 520.0,171.00 521.0,170.34 522.0,169.58 523.0,168.70 524.0,167.73 525.0,166.66 526.0,165.48 527.0,164.22 528.0,162.86 529.0,161.41 530.0,159.89 531.0,158.28 532.0,156.60 533.0,154.86 534.0,153.05 535.0,151.18 536.0,149.26 537.0,147.29 538.0,145.28 539.0,143.23 540.0,141.16 541.0,139.06 542.0,136.94 543.0,134.81 544.0,132.68 545.0,130.55 546.0,128.42 547.0,126.31 548.0,124.22 549.0,122.15 550.0,120.12 551.0,118.12 552.0,116.16 553.0,114.26 554.0,112.40 555.0,110.61 556.0,108.89 557.0,107.23 558.0,105.65 559.0,104.14 560.0,102.73 561.0,101.39 562.0,100.16 563.0,99.01 564.0,97.97 565.0,97.02 566.0,96.18 567.0,95.45 568.0,94.83 569.0,94.60 570.0,94.60 571.0,94.60 572.0,94.60 573.0,94.60 574.0,94.60 575.0,94.60 576.0,94.60 577.0,94.60 578.0,94.83 579.0,95.45 580.0,96.18 581.0,97.02 582.0,97.97 583.0,99.01 584.0,100.16 585.0,101.39 586.0,102.73 587.0,104.14 588.0,105.65 589.0,107.23 590.0,108.89 591.0,110.61 592.0,112.40 593.0,114.26 594.0,116.16 595.0,118.12" fill="none" stroke="#d8d8aa" stroke-width="1"/>
<polyline points="14.0,176.15 15.0,178.22 16.0,180.31 17.0,182.42 18.0,184.55 19.0,186.68 20.0,188.81 20.5,189.88 20.5,268.88 21.0,269.94 22.0,272.06 23.0,274.16 24.0,276.23 25.0,278.28 26.0,280.29 27.0,282.26 28.0,284.18 29.0,286.05 30.0,287.86 31.0,289.60 32.0,291.28 33.0,292.89 34.0,294.41 35.0,295.86 36.0,297.22 37.0,298.48 38.0,299.66 39.0,300.73 40.0,301.70 41.0,302.58 42.0,303.34 43.0,303.80 44.0,303.80 45.0,303.80 46.0,303.80 47.0,303.80 48.0,303.80 49.0,303.80 50.0,303.80 51.0,303.80 52.0,303.80 53.0,303.80 54.0,303.75 55.0,303.05 56.0,302.24 57.0,301.33 58.0,300.31 59.0,299.20 60.0,297.99 61.0,296.68 62.0,295.29 63.0,293.81 64.0,292.25 65.0,290.62 66.0,288.91 67.0,287.14 68.0,285.31 69.0,283.41 70.0,281.47 71.0,279.49 72.0,277.46 73.0,275.41 74.0,273.32 75.0,271.21 76.0,269.09 77.0,266.96 78.0,264.83 78.5,263.76 78.5,184.76 79.0,183.70 80.0,181.58 81.0,179.47 82.0,177.39 83.0,175.33 84.0,173.31 85.0,171.33 86.0,169.39 87.0,167.51 88.0,165.68 89.0,163.91 90.0,162.21 91.0,160.59 92.0,159.04 93.0,157.57 94.0,156.18 95.0,154.89 96.0,153.69 97.0,152.58 98.0,151.58 99.0,150.67 100.0,149.88 101.0,149.19 102.0,148.61 103.0,148.50 104.0,148.50 105.0,148.50 106.0,148.50 107.0,148.50 108.0,148.50 109.0,148.50 110.0,148.50 111.0,148.51 112.0,149.06 113.0,149.73 114.0,150.51 115.0,151.39 116.0,152.37 117.0,153.46 118.0,154.64 119.0,155.92 120.0,157.28 121.0,158.74 122.0,160.27 123.0,161.88 124.0,163.57 125.0,165.32 126.0,167.14 127.0,169.01 128.0,170.94 129.0,172.91 130.0,174.93 131.0,176.97 132.0,179.05 133.0,181.15 134.0,183.27 135.0,185.40 136.0,187.53 137.0,189.67 136.5,188.60 136.5,267.60 138.0,270.79 139.0,272.90 140.0,274.99 141.0,277.05 142.0,279.09 143.0,281.08 144.0,283.03 145.0,284.93 146.0,286.78 147.0,288.56 148.0,290.28 149.0,291.93 150.0,293.51 151.0,295.00 152.0,296.41 153.0,297.73 154.0,298.96 155.0,300.10 156.0,301.13 157.0,302.07 158.0,302.89 159.0,303.62 160.0,303.80 161.0,303.80 162.0,303.80 163.0,303.80 164.0,303.80 165.0,303.80 166.0,303.80 167.0,303.80 168.0,303.80 169.0,303.80 170.0,303.80 171.0,303.48 172.0,302.74 173.0,301.89 174.0,300.93 175.0,299.88 176.0,298.72 177.0,297.48 178.0,296.14 179.0,294.71 180.0,293.20 181.0,291.61 182.0,289.94 183.0,288.21 184.0,286.41 185.0,284.56 186.0,282.64 187.0,280.68 188.0,278.68 189.0,276.64 190.0,274.57 191.0,272.48 192.0,270.37 193.0,268.24 194.0,266.11 195.0,263.97 195.5,262.91 195.5,183.91 196.0,182.85 197.0,180.73 198.0,178.63 199.0,176.56 200.0,174.52 201.0,172.51 202.0,170.55 203.0,168.63 204.0,166.77 205.0,164.97 206.0,163.23 207.0,161.55 208.0,159.96 209.0,158.44 210.0,157.00 211.0,155.65 212.0,154.40 213.0,153.23 214.0,152.17 215.0,151.20 216.0,150.34 217.0,149.59 218.0,148.94 219.0,148.50 220.0,148.50 221.0,148.50 222.0,148.50 223.0,148.50 224.0,148.50 225.0,148.50 226.0,148.50 227.0,148.50 228.0,148.72 229.0,149.32 230.0,150.03 231.0,150.85 232.0,151.77 233.0,152.79 234.0,153.92 235.0,155.14 236.0,156.45 237.0,157.85 238.0,159.34 239.0,160.91 240.0,162.55 241.0,164.26 242.0,166.04 243.0,167.88 244.0,169.78 245.0,171.72 246.0,173.71 247.0,175.74 248.0,177.80 249.0,179.89 250.0,182.00 251.0,184.12 252.0,186.25 253.0,188.39 253.5,189.45 253.5,268.45 254.0,269.52 255.0,271.64 256.0,273.74 257.0,275.82 258.0,277.87 259.0,279.89 260.0,281.87 261.0,283.80 262.0,285.68 263.0,287.50 264.0,289.26 265.0,290.95 266.0,292.57 267.0,294.11 268.0,295.58 269.0,296.95 270.0,298.24 271.0,299.43 272.0,300.52 273.0,301.52 274.0,302.41 275.0,303.20 276.0,303.80 277.0,303.80 278.0,303.80 279.0,303.80 280.0,303.80 281.0,303.80 282.0,303.80 283.0,303.80 284.0,303.80 285.0,303.80 286.0,303.80 287.0,303.80 288.0,303.20 289.0,302.41 290.0,301.52 291.0,300.52 292.0,299.43 293.0,298.24 294.0,296.95 295.0,295.58 296.0,294.11 297.0,292.57 298.0,290.95 299.0,289.26 300.0,287.50 301.0,285.68 302.0,283.80 303.0,281.87 304.0,279.89 305.0,277.87 306.0,275.82 307.0,273.74 308.0,271.64 309.0,269.52 310.0,267.39 311.0,265.25 311.5,264.19 311.5,185.19 312.0,184.12 313.0,182.00 314.0,179.89 315.0,177.80 316.0,175.74 317.0,173.71 318.0,171.72 319.0,169.78 320.0,167.88 321.0,166.04 322.0,164.26 323.0,162.55 324.0,160.91 325.0,159.34 326.0,157.85 327.0,156.45 328.0,155.14 329.0,153.92 330.0,152.79 331.0,151.77 332.0,150.85 333.0,150.03 334.0,149.32 335.0,148.72 336.0,148.50 337.0,148.50 338.0,148.50 339.0,148.50 340.0,148.50 341.0,148.50 342.0,148.50 343.0,148.50 344.0,148.50 345.0,148.94 346.0,149.59 347.0,150.34 348.0,151.20 349.0,152.17 350.0,153.23 351.0,154.40 352.0,155.65 353.0,157.00 354.0,158.44 355.0,159.96 356.0,161.55 357.0,163.23 358.0,164.97 359.0,166.77 360.0,168.63 361.0,170.55 362.0,172.51 363.0,174.52 364.0,176.56 365.0,178.63 366.0,180.73 367.0,182.85 368.0,184.97 369.0,187.11 370.0,189.24 370.5,190.30 370.5,269.30 371.0,270.37 372.0,272.48 373.0,274.57 374.0,276.64 375.0,278.68 376.0,280.68 377.0,282.64 378.0,284.56 379.0,286.41 380.0,288.21 381.0,289.94 382.0,291.61 383.0,293.20 384.0,294.71 385.0,296.14 386.0,297.48 387.0,298.72 388.0,299.88 389.0,300.93 390.0,301.89 391.0,302.74 392.0,303.48 393.0,303.80 394.0,303.80 395.0,303.80 396.0,303.80 397.0,303.80 398.0,303.80 399.0,303.80 400.0,303.80 401.0,303.80 402.0,303.80 403.0,303.80 404.0,303.62 405.0,302.89 406.0,302.07 407.0,301.13 408.0,300.10 409.0,298.96 410.0,297.73 411.0,296.41 412.0,295.00 413.0,293.51 414.0,291.93 415.0,290.28 416.0,288.56 417.0,286.78 418.0,284.93 419.0,283.03 420.0,281.08 421.0,279.09 422.0,277.05 423.0,274.99 424.0,272.90 425.0,270.79 426.0,268.67 427.0,266.53 428.0,264.40 428.5,263.33 428.5,184.33 429.0,183.27 430.0,181.15 431.0,179.05 432.0,176.97 433.0,174.93 434.0,172.91 435.0,170.94 436.0,169.01 437.0,167.14 438.0,165.32 439.0,163.57 440.0,161.88 441.0,160.27 442.0,158.74 443.0,157.28 444.0,155.92 445.0,154.64 446.0,153.46 447.0,152.37 448.0,151.39 449.0,150.51 450.0,149.73 451.0,149.06 452.0,148.51 453.0,148.50 454.0,148.50 455.0,148.50 456.0,148.50 457.0,148.50 458.0,148.50 459.0,148.50 460.0,148.50 461.0,148.61 462.0,149.19 463.0,149.88 464.0,150.67 465.0,151.58 466.0,152.58 467.0,153.69 468.0,154.89 469.0,156.18 470.0,157.57 471.0,159.04 472.0,160.59 473.0,162.21 474.0,163.91 475.0,165.68 476.0,167.51 477.0,169.39 478.0,171.33 479.0,173.31 480.0,175.33 481.0,177.39 482.0,179.47 483.0,181.58 484.0,183.70 485.0,185.83 486.0,187.96 486.5,189.03 486.5,268.03 487.0,269.09 488.0,271.21 489.0,273.32 490.0,275.41 491.0,277.46 492.0,279.49 493.0,281.47 494.0,283.41 495.0,285.31 496.0,287.14 497.0,288.91 498.0,290.62 499.0,292.25 500.0,293.81 501.0,295.29 502.0,296.68 503.0,297.99 504.0,299.20 505.0,300.31 506.0,301.33 507.0,302.24 508.0,303.05 509.0,303.75 510.0,303.80 511.0,303.80 512.0,303.80 513.0,303.80 514.0,303.80 515.0,303.80 516.0,303.80 517.0,303.80 518.0,303.80 519.0,303.80 520.0,303.80 521.0,303.34 522.0,302.58 523.0,301.70 524.0,300.73 525.0,299.66 526.0,298.48 527.0,297.22 528.0,295.86 529.0,294.41 530.0,292.89 531.0,291.28 532.0,289.60 533.0,287.86 534.0,286.05 535.0,284.18 536.0,282.26 537.0,280.29 538.0,278.28 539.0,276.23 540.0,274.16 541.0,272.06 542.0,269.94 543.0,267.81 544.0,265.68 545.0,263.55 545.5,262.48 545.5,183.48 546.0,182.42 547.0,180.31 548.0,178.22 549.0,176.15 550.0,174.12 551.0,172.12 552.0,170.16 553.0,168.26 554.0,166.40 555.0,164.61 556.0,162.89 557.0,161.23 558.0,159.65 559.0,158.14 560.0,156.73 561.0,155.39 562.0,154.16 563.0,153.01 564.0,151.97 565.0,151.02 566.0,150.18 567.0,149.45 568.0,148.83 569.0,148.50 570.0,148.50 571.0,148.50 572.0,148.50 573.0,148.50 574.0,148.50 575.0,148.50 576.0,148.50 577.0,148.50 578.0,148.83 579.0,149.45 580.0,150.18 581.0,151.02 582.0,151.97 583.0,153.01 584.0,154.16 585.0,155.39 586.0,156.73 587.0,158.14 588.0,159.65 589.0,161.23 590.0,162.89 591.0,164.61 592.0,166.40 593.0,168.26 594.0,170.16 595.0,172.12" fill="none" stroke="#a83444" stroke-width="1"/>
<polyline points="14,287.5 20.5,287.5 20.5,366.5 78.5,366.5 78.5,287.5 136.5,287.5 136.5,366.5 195.5,366.5 195.5,287.5 253.5,287.5 253.5,366.5 311.5,366.5 311.5,287.5 370.5,287.5 370.5,366.5 428.5,366.5 428.5,287.5 486.5,287.5 486.5,366.5 545.5,366.5 545.5,287.5 595,287.5" fill="none" stroke="#b0d8d4" stroke-width="1"/>
<path d="M1.6 125.5H8.6L11.6 128.9L8.6 132.3H1.6Z" fill="#eaea38"/>
<path d="M1.6 218.79999999999998H8.6L11.6 222.2L8.6 225.6H1.6Z" fill="#e02838"/>
<path d="M1.6 323.6H8.6L11.6 326.6L8.6 329.6H1.6Z" fill="#b0ecf0"/>
<path d="M607.5 138.9H600.5L597.5 142.3L600.5 145.70000000000002H607.5Z" fill="#eaea38"/>
<text x="6.2" y="131.3" font-family="Liberation Sans" font-weight="bold" font-size="6.3" fill="#202010" text-anchor="middle">1</text>
<text x="6.4" y="224.6" font-family="Liberation Sans" font-weight="bold" font-size="6.3" fill="#202010" text-anchor="middle">M</text>
<text x="6.2" y="329" font-family="Liberation Sans" font-weight="bold" font-size="6.3" fill="#202010" text-anchor="middle">2</text>
<text x="602.8" y="144.7" font-family="Liberation Sans" font-weight="bold" font-size="6.3" fill="#202010" text-anchor="middle">T</text>
<path d="M301.3 70.6H307.9V75.2L304.6 78.6L301.3 75.2Z" fill="#f0a04a" stroke="#d87018" stroke-width="1"/>
<path d="M101.7 65.5H106.2V56.5H111.7V65.5H118.7" fill="none" stroke="#c8d4b0" stroke-width="1"/>
<polyline points="269.00,61.2 272.00,64 275.00,61.2 278.00,64 281.00,61.2 284.00,64 287.00,61.2 290.00,64 293.00,61.2 296.00,64 299.00,61.2 302.00,64 305.00,61.2 308.00,64 311.00,61.2 314.00,64 317.00,61.2 320.00,64 323.00,61.2 326.00,64 329.00,61.2 332.00,64 335.00,61.2 338.00,64 341.00,61.2" fill="none" stroke="#ccd4bc" stroke-width="1"/>
<path d="M267.5 58.5V66M342.5 58.5V66" stroke="#c8c8c8" stroke-width="1"/>
<path d="M304.5 55V58" stroke="#e07820" stroke-width="1"/><path d="M302.5 55H306.5" stroke="#e07820" stroke-width="1"/>
<path d="M551 65.5H554.6V56.3H557.2" fill="none" stroke="#e8e8c8" stroke-width="1"/><path d="M552.4 61.6L554.6 59.2L556.8 61.6Z" fill="#e8e8c8"/>
<rect x="559.8" y="56.7" width="15.9" height="9.1" fill="#f0f050"/>
<rect x="13" y="395.6" width="52.5" height="12.8" fill="#000"/>
<rect x="76" y="395.6" width="54.3" height="12.8" fill="#000"/>
<rect x="78" y="397.9" width="15.3" height="8.3" fill="#b0e4f4"/>
<path d="M30.8 402.8Q32.2 399.2 33.6 401.6T36.4 400.4" fill="none" stroke="#e0dca8" stroke-width="0.9"/>
<path d="M94.6 402.8Q96 399.2 97.4 401.6T100.2 400.4" fill="none" stroke="#b8d4dc" stroke-width="0.9"/>
<rect x="543" y="396.2" width="52.6" height="11.6" fill="#000"/>
</svg><div style="position:absolute;left:608px;top:52.8px;width:112px;height:356px;background:#f0f0f0"></div>
<div style="position:absolute;left:608px;top:52.8px;width:3px;height:356px;background:#f7f7f7"></div>
<div style="position:absolute;left:609px;top:70px;width:111px;height:1px;background:#e8e8e8"></div>
<div style="position:absolute;left:711.5px;top:71px;width:8.5px;height:338px;background:#f0f0f0"></div>
<div style="position:absolute;left:712px;top:80px;width:8px;height:246px;background:#d2d2d2"></div><svg width="720" height="421" style="position:absolute;left:0;top:0">
<defs><radialGradient id="ring" cx="0.5" cy="0.5" r="0.5"><stop offset="0.75" stop-color="#8a8a8a"/><stop offset="0.85" stop-color="#c8c8c8"/><stop offset="1" stop-color="#7a7a7a"/></radialGradient></defs>
<path d="M712.8 77.5L715.8 74.5L718.8 77.5" fill="none" stroke="#606060" stroke-width="1"/>
<circle cx="648.6" cy="62" r="6.6" fill="#f6e6cf"/><circle cx="648.6" cy="62" r="5.6" fill="#f0902a" stroke="#d27818" stroke-width="0.7"/>
<rect x="612" y="77" width="97" height="62.5" fill="none" stroke="#e4e4e4" stroke-width="1"/>
<rect x="612" y="148.5" width="97" height="87.5" fill="none" stroke="#e4e4e4" stroke-width="1"/>
<rect x="612" y="243.5" width="97" height="138.0" fill="none" stroke="#e4e4e4" stroke-width="1"/>
<path d="M660.5 406.5H709" stroke="#dddddd" stroke-width="1"/>
<rect x="614.3" y="96.5" width="39.200000000000045" height="12.0" fill="#e5e5e5" stroke="#cccccc" stroke-width="1"/><path d="M646.0 101.2L648.5 103.7L651.0 101.2" fill="none" stroke="#555" stroke-width="0.9"/>
<rect x="614.3" y="124.8" width="39.200000000000045" height="11.700000000000003" fill="#e5e5e5" stroke="#cccccc" stroke-width="1"/><path d="M646.0 129.35L648.5 131.85L651.0 129.35" fill="none" stroke="#555" stroke-width="0.9"/>
<rect x="614.3" y="158.7" width="39.0" height="11.5" fill="#e5e5e5" stroke="#cccccc" stroke-width="1"/><path d="M645.8 163.14999999999998L648.3 165.64999999999998L650.8 163.14999999999998" fill="none" stroke="#555" stroke-width="0.9"/>
<rect x="614.3" y="190.2" width="39.0" height="12.0" fill="#e5e5e5" stroke="#cccccc" stroke-width="1"/><path d="M645.8 194.89999999999998L648.3 197.39999999999998L650.8 194.89999999999998" fill="none" stroke="#555" stroke-width="0.9"/>
<rect x="614.3" y="206.7" width="39.0" height="11.800000000000011" fill="#e5e5e5" stroke="#cccccc" stroke-width="1"/><path d="M645.8 211.29999999999998L648.3 213.79999999999998L650.8 211.29999999999998" fill="none" stroke="#555" stroke-width="0.9"/>
<rect x="664.6" y="251.6" width="39.10000000000002" height="12.400000000000006" fill="#e5e5e5" stroke="#cccccc" stroke-width="1"/><path d="M696.2 256.5L698.7 259.0L701.2 256.5" fill="none" stroke="#555" stroke-width="0.9"/>
<rect x="664.6" y="269.3" width="39.10000000000002" height="12.0" fill="#e5e5e5" stroke="#cccccc" stroke-width="1"/><path d="M696.2 274.0L698.7 276.5L701.2 274.0" fill="none" stroke="#555" stroke-width="0.9"/>
<rect x="664.6" y="286.8" width="39.10000000000002" height="12.0" fill="#e5e5e5" stroke="#cccccc" stroke-width="1"/><path d="M696.2 291.5L698.7 294.0L701.2 291.5" fill="none" stroke="#555" stroke-width="0.9"/>
<rect x="664.6" y="304.3" width="39.10000000000002" height="12.199999999999989" fill="#e5e5e5" stroke="#cccccc" stroke-width="1"/><path d="M696.2 309.09999999999997L698.7 311.59999999999997L701.2 309.09999999999997" fill="none" stroke="#555" stroke-width="0.9"/>
<rect x="614.3" y="174.3" width="37.8" height="12" fill="#ffffff" stroke="#b4b4b4" stroke-width="1"/>
<rect x="644" y="175" width="7.5" height="10.6" fill="#f2f2f2"/>
<path d="M645.8 178.3H649.6L647.7 176.2Z M645.8 182.3H649.6L647.7 184.4Z" fill="#222"/>
<rect x="656.3" y="159.6" width="7.2" height="7" fill="#fff" stroke="#555" stroke-width="0.9"/>
<path d="M657.8 163L659.6 165L662.3 160.8" fill="none" stroke="#333" stroke-width="0.9"/>
<path d="M663.5 127.8L666.5 123.8M700.5 127.8L697.5 123.8" stroke="#3a3a3a" stroke-width="1.2"/><ellipse cx="682" cy="107.8" rx="22" ry="21" fill="#808080"/><ellipse cx="682" cy="107.8" rx="21.1" ry="20.1" fill="#c6c6c6"/><ellipse cx="682" cy="108.0" rx="19.4" ry="18.5" fill="#9c9c9c"/><ellipse cx="682" cy="108.1" rx="18.6" ry="17.8" fill="#bdbdbd"/><circle cx="682" cy="108.6" r="16.9" fill="#12008a"/><circle cx="682" cy="108.6" r="15.9" fill="#1a08b4"/><path d="M685.3 96L682.9 104.6" stroke="#c0b8ff" stroke-width="1.2"/>
<path d="M663.5 214.8L666.5 210.8M700.5 214.8L697.5 210.8" stroke="#3a3a3a" stroke-width="1.2"/><ellipse cx="682" cy="194.8" rx="22" ry="21" fill="#808080"/><ellipse cx="682" cy="194.8" rx="21.1" ry="20.1" fill="#c6c6c6"/><ellipse cx="682" cy="195.0" rx="19.4" ry="18.5" fill="#9c9c9c"/><ellipse cx="682" cy="195.10000000000002" rx="18.6" ry="17.8" fill="#bdbdbd"/><circle cx="682" cy="195.60000000000002" r="16.9" fill="#3a7a7c"/><circle cx="682" cy="195.60000000000002" r="15.9" fill="#98f4f8"/><path d="M674.2 182.8L680.3 191" stroke="#2a3434" stroke-width="1.2"/>
<path d="M667.2 310.5H670.8M669 308.7V312.3" stroke="#333" stroke-width="0.9"/>
</svg><div style="position:absolute;left:0px;top:408.8px;width:720px;height:12.2px;background:#f0f0f0"></div><div style="position:absolute;left:16.00px;top:3.60px;font-size:7.85px;line-height:8.77px;color:#2c2c2c;font-weight:normal;white-space:pre;-webkit-text-stroke:0.05px #2c2c2c;transform-origin:0 0;transform:scaleX(0.928);will-change:transform">DSO-3074 Ver2.1.31 - [Scope1]</div>
<div style="position:absolute;left:18.12px;top:19.49px;font-size:7.41px;line-height:8.28px;color:#262626;font-weight:normal;white-space:pre;-webkit-text-stroke:0.12px #262626;transform-origin:0 0;transform:scaleX(0.837);will-change:transform">File</div>
<div style="position:absolute;left:36.78px;top:19.49px;font-size:7.41px;line-height:8.28px;color:#262626;font-weight:normal;white-space:pre;-webkit-text-stroke:0.12px #262626;transform-origin:0 0;transform:scaleX(0.940);will-change:transform">View</div>
<div style="position:absolute;left:60.44px;top:19.49px;font-size:7.41px;line-height:8.28px;color:#262626;font-weight:normal;white-space:pre;-webkit-text-stroke:0.12px #262626;transform-origin:0 0;transform:scaleX(0.913);will-change:transform">Setup</div>
<div style="position:absolute;left:88.12px;top:19.49px;font-size:7.41px;line-height:8.28px;color:#262626;font-weight:normal;white-space:pre;-webkit-text-stroke:0.12px #262626;transform-origin:0 0;transform:scaleX(0.974);will-change:transform">Display</div>
<div style="position:absolute;left:120.00px;top:19.49px;font-size:7.41px;line-height:8.28px;color:#262626;font-weight:normal;white-space:pre;-webkit-text-stroke:0.12px #262626;transform-origin:0 0;transform:scaleX(0.982);will-change:transform">Cursor</div>
<div style="position:absolute;left:150.44px;top:19.49px;font-size:7.41px;line-height:8.28px;color:#262626;font-weight:normal;white-space:pre;-webkit-text-stroke:0.12px #262626;transform-origin:0 0;transform:scaleX(1.011);will-change:transform">Measure</div>
<div style="position:absolute;left:188.22px;top:19.49px;font-size:7.41px;line-height:8.28px;color:#262626;font-weight:normal;white-space:pre;-webkit-text-stroke:0.12px #262626;transform-origin:0 0;transform:scaleX(0.994);will-change:transform">Acquire</div>
<div style="position:absolute;left:221.78px;top:19.49px;font-size:7.41px;line-height:8.28px;color:#262626;font-weight:normal;white-space:pre;-webkit-text-stroke:0.12px #262626;transform-origin:0 0;transform:scaleX(1.009);will-change:transform">Utility</div>
<div style="position:absolute;left:248.22px;top:19.49px;font-size:7.41px;line-height:8.28px;color:#262626;font-weight:normal;white-space:pre;-webkit-text-stroke:0.12px #262626;transform-origin:0 0;transform:scaleX(1.033);will-change:transform">Window</div>
<div style="position:absolute;left:283.66px;top:19.49px;font-size:7.41px;line-height:8.28px;color:#262626;font-weight:normal;white-space:pre;-webkit-text-stroke:0.12px #262626;transform-origin:0 0;transform:scaleX(0.983);will-change:transform">Help</div>
<div style="position:absolute;left:6.66px;top:57.91px;font-size:8.72px;line-height:9.74px;color:#98c058;font-weight:normal;white-space:pre;-webkit-text-stroke:0.2px #98c058;transform-origin:0 0;transform:scaleX(0.827);will-change:transform">Trig'D</div>
<div style="position:absolute;left:561.12px;top:56.77px;font-size:7.99px;line-height:8.93px;color:#101000;font-weight:bold;white-space:pre;-webkit-text-stroke:0px #101000;transform-origin:0 0;transform:scaleX(0.849);will-change:transform">CH1</div>
<div style="position:absolute;left:578.64px;top:56.57px;font-size:7.99px;line-height:8.93px;color:#e4e4b0;font-weight:normal;white-space:pre;-webkit-text-stroke:0.2px #e4e4b0;transform-origin:0 0;transform:scaleX(0.924);will-change:transform">-188mV</div>
<div style="position:absolute;left:25.00px;top:379.04px;font-size:9.01px;line-height:10.07px;color:#9a262e;font-weight:normal;white-space:pre;-webkit-text-stroke:0.2px #9a262e;transform-origin:0 0;transform:scaleX(0.769);will-change:transform">MATH Scale:  500mV</div>
<div style="position:absolute;left:14.78px;top:398.96px;font-size:7.56px;line-height:8.44px;color:#e0dca8;font-weight:normal;white-space:pre;-webkit-text-stroke:0.2px #e0dca8;transform-origin:0 0;transform:scaleX(1.006);will-change:transform">CH1</div>
<div style="position:absolute;left:39.52px;top:398.96px;font-size:7.56px;line-height:8.44px;color:#e0dca8;font-weight:normal;white-space:pre;-webkit-text-stroke:0.2px #e0dca8;transform-origin:0 0;transform:scaleX(0.961);will-change:transform">500mV</div>
<div style="position:absolute;left:79.00px;top:398.96px;font-size:7.56px;line-height:8.44px;color:#204858;font-weight:normal;white-space:pre;-webkit-text-stroke:0.2px #204858;transform-origin:0 0;transform:scaleX(0.874);will-change:transform">CH2</div>
<div style="position:absolute;left:103.24px;top:398.96px;font-size:7.56px;line-height:8.44px;color:#b8d4dc;font-weight:normal;white-space:pre;-webkit-text-stroke:0.2px #b8d4dc;transform-origin:0 0;transform:scaleX(0.929);will-change:transform">500mV</div>
<div style="position:absolute;left:544.88px;top:398.96px;font-size:7.56px;line-height:8.44px;color:#c89070;font-weight:normal;white-space:pre;-webkit-text-stroke:0.2px #c89070;transform-origin:0 0;transform:scaleX(0.948);will-change:transform">Time: 500.0us</div>
<div style="position:absolute;left:615.10px;top:57.72px;font-size:7.27px;line-height:8.12px;color:#1e1e1e;font-weight:normal;white-space:pre;-webkit-text-stroke:0.12px #1e1e1e;transform-origin:0 0;transform:scaleX(0.825);will-change:transform">Connect:</div>
<div style="position:absolute;left:618.00px;top:72.62px;font-size:7.27px;line-height:8.12px;color:#1e1e1e;font-weight:normal;white-space:pre;-webkit-text-stroke:0.12px #1e1e1e;transform-origin:0 0;transform:scaleX(0.856);will-change:transform">Horizontal</div>
<div style="position:absolute;left:614.10px;top:84.92px;font-size:7.27px;line-height:8.12px;color:#1e1e1e;font-weight:normal;white-space:pre;-webkit-text-stroke:0.12px #1e1e1e;transform-origin:0 0;transform:scaleX(0.793);will-change:transform">Time / DIV</div>
<div style="position:absolute;left:615.88px;top:99.42px;font-size:7.27px;line-height:8.12px;color:#1e1e1e;font-weight:normal;white-space:pre;-webkit-text-stroke:0.12px #1e1e1e;transform-origin:0 0;transform:scaleX(0.875);will-change:transform">500.0us</div>
<div style="position:absolute;left:614.00px;top:113.02px;font-size:7.27px;line-height:8.12px;color:#1e1e1e;font-weight:normal;white-space:pre;-webkit-text-stroke:0.12px #1e1e1e;transform-origin:0 0;transform:scaleX(0.841);will-change:transform">Format</div>
<div style="position:absolute;left:615.88px;top:126.72px;font-size:7.27px;line-height:8.12px;color:#1e1e1e;font-weight:normal;white-space:pre;-webkit-text-stroke:0.12px #1e1e1e;transform-origin:0 0;transform:scaleX(0.865);will-change:transform">Y - T</div>
<div style="position:absolute;left:618.00px;top:145.42px;font-size:7.27px;line-height:8.12px;color:#1e1e1e;font-weight:normal;white-space:pre;-webkit-text-stroke:0.12px #1e1e1e;transform-origin:0 0;transform:scaleX(0.847);will-change:transform">Vertical</div>
<div style="position:absolute;left:616.10px;top:161.42px;font-size:7.27px;line-height:8.12px;color:#1e1e1e;font-weight:normal;white-space:pre;-webkit-text-stroke:0.12px #1e1e1e;transform-origin:0 0;transform:scaleX(0.829);will-change:transform">CH2</div>
<div style="position:absolute;left:666.12px;top:160.42px;font-size:7.27px;line-height:8.12px;color:#1e1e1e;font-weight:normal;white-space:pre;-webkit-text-stroke:0.12px #1e1e1e;transform-origin:0 0;transform:scaleX(0.791);will-change:transform">ON/OFF</div>
<div style="position:absolute;left:616.22px;top:177.22px;font-size:7.27px;line-height:8.12px;color:#1e1e1e;font-weight:normal;white-space:pre;-webkit-text-stroke:0.12px #1e1e1e;transform-origin:0 0;transform:scaleX(0.833);will-change:transform">500mV</div>
<div style="position:absolute;left:616.10px;top:192.72px;font-size:7.27px;line-height:8.12px;color:#1e1e1e;font-weight:normal;white-space:pre;-webkit-text-stroke:0.12px #1e1e1e;transform-origin:0 0;transform:scaleX(0.891);will-change:transform">AC</div>
<div style="position:absolute;left:616.10px;top:208.72px;font-size:7.27px;line-height:8.12px;color:#1e1e1e;font-weight:normal;white-space:pre;-webkit-text-stroke:0.12px #1e1e1e;transform-origin:0 0;transform:scaleX(0.827);will-change:transform">x1</div>
<div style="position:absolute;left:618.12px;top:240.22px;font-size:7.27px;line-height:8.12px;color:#1e1e1e;font-weight:normal;white-space:pre;-webkit-text-stroke:0.12px #1e1e1e;transform-origin:0 0;transform:scaleX(0.867);will-change:transform">Trigger</div>
<div style="position:absolute;left:614.44px;top:253.72px;font-size:7.27px;line-height:8.12px;color:#1e1e1e;font-weight:normal;white-space:pre;-webkit-text-stroke:0.12px #1e1e1e;transform-origin:0 0;transform:scaleX(0.829);will-change:transform">Trigger Mode</div>
<div style="position:absolute;left:614.44px;top:272.42px;font-size:7.27px;line-height:8.12px;color:#1e1e1e;font-weight:normal;white-space:pre;-webkit-text-stroke:0.12px #1e1e1e;transform-origin:0 0;transform:scaleX(0.885);will-change:transform">Trigger Sweep</div>
<div style="position:absolute;left:613.88px;top:289.32px;font-size:7.27px;line-height:8.12px;color:#1e1e1e;font-weight:normal;white-space:pre;-webkit-text-stroke:0.12px #1e1e1e;transform-origin:0 0;transform:scaleX(0.863);will-change:transform">Trigger Source</div>
<div style="position:absolute;left:613.88px;top:306.12px;font-size:7.27px;line-height:8.12px;color:#1e1e1e;font-weight:normal;white-space:pre;-webkit-text-stroke:0.12px #1e1e1e;transform-origin:0 0;transform:scaleX(0.849);will-change:transform">Trigger Slope</div>
<div style="position:absolute;left:666.66px;top:253.82px;font-size:7.27px;line-height:8.12px;color:#1e1e1e;font-weight:normal;white-space:pre;-webkit-text-stroke:0.12px #1e1e1e;transform-origin:0 0;transform:scaleX(0.766);will-change:transform">Edge</div>
<div style="position:absolute;left:666.66px;top:272.02px;font-size:7.27px;line-height:8.12px;color:#1e1e1e;font-weight:normal;white-space:pre;-webkit-text-stroke:0.12px #1e1e1e;transform-origin:0 0;transform:scaleX(0.816);will-change:transform">AUTO</div>
<div style="position:absolute;left:667.00px;top:289.42px;font-size:7.27px;line-height:8.12px;color:#1e1e1e;font-weight:normal;white-space:pre;-webkit-text-stroke:0.12px #1e1e1e;transform-origin:0 0;transform:scaleX(0.826);will-change:transform">CH1</div>
<div style="position:absolute;left:615.00px;top:400.62px;font-size:7.27px;line-height:8.12px;color:#1e1e1e;font-weight:normal;white-space:pre;-webkit-text-stroke:0.12px #1e1e1e;transform-origin:0 0;transform:scaleX(0.873);will-change:transform">Move Waveform</div>
<div style="position:absolute;left:1.00px;top:411.72px;font-size:7.27px;line-height:8.12px;color:#1e1e1e;font-weight:normal;white-space:pre;-webkit-text-stroke:0.12px #1e1e1e;transform-origin:0 0;transform:scaleX(1.024);will-change:transform">Connected</div>
<div style="position:absolute;left:649.00px;top:411.82px;font-size:7.27px;line-height:8.12px;color:#1e1e1e;font-weight:normal;white-space:pre;-webkit-text-stroke:0.12px #1e1e1e;transform-origin:0 0;transform:scaleX(1.027);will-change:transform">28-04-2016&nbsp; 10:13</div><div style="position:absolute;left:707.8px;top:410px;width:12.2px;height:11px;background:#f0f0f0"></div><svg width="720" height="421" style="position:absolute;left:0;top:0"><path d="M718 416h1v1h-1zM716 418h1v1h-1zM718 418h1v1h-1zM714 420h1v1h-1zM716 420h1v1h-1zM718 420h1v1h-1z" fill="#b0b0b0"/></svg>
</body></html>
